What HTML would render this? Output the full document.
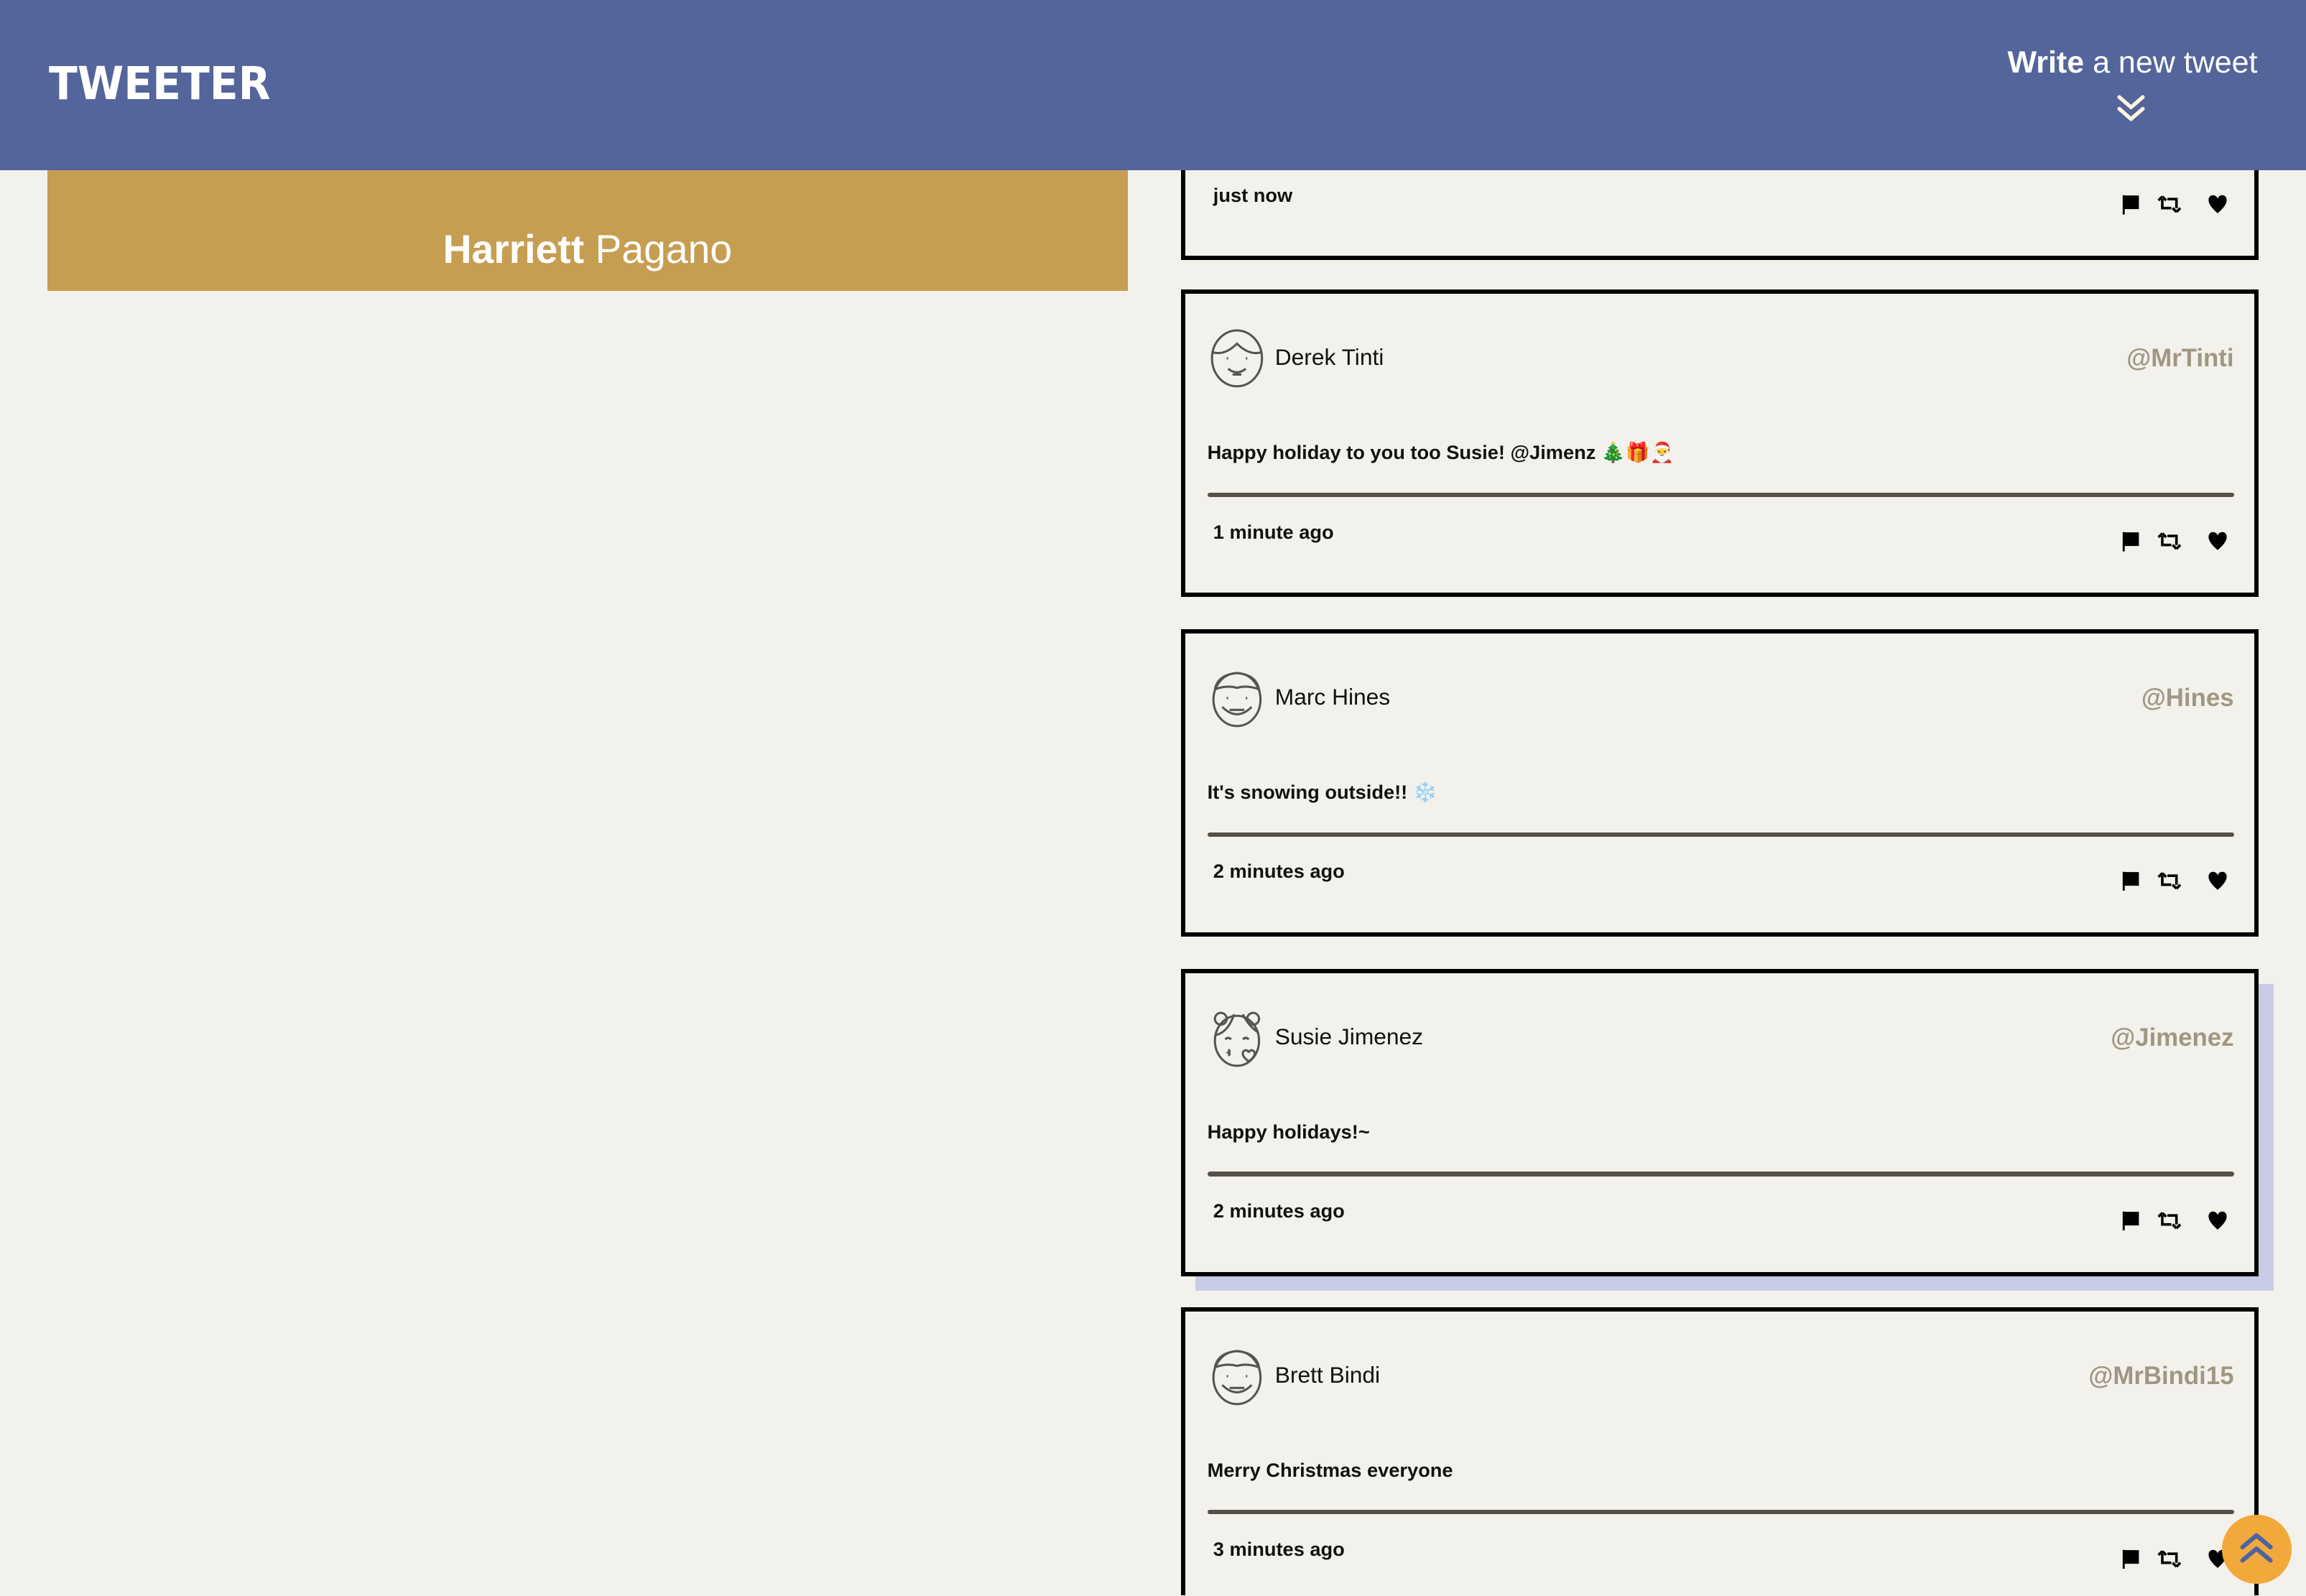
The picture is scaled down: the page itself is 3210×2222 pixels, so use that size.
<!DOCTYPE html>
<html><head><meta charset="utf-8"><style>
html,body{margin:0;padding:0;background:#f3f1ec;overflow:hidden}
#w{zoom:2.0472;width:1568px;height:1085px;position:relative;overflow:hidden;font-family:"Liberation Sans","Noto Sans CJK JP",sans-serif;background:#f3f1ec}
.hdr{position:absolute;left:0;top:0;width:1568px;height:116px;background:#53659a;z-index:5}
.logo{position:absolute;left:33px;top:40px;color:#fff;font:900 31px/34px "DejaVu Sans","Liberation Sans",sans-serif;transform:scaleX(0.92);transform-origin:left}
.wr{position:absolute;right:33px;top:31px;color:#fff;font-size:21px;font-weight:300}
.wr b{font-weight:700}
.chev{position:absolute;left:1439px;top:64px}
.gold{position:absolute;left:32px;top:100px;width:735px;height:98px;background:#c69e52}
.name{position:absolute;left:0;width:735px;top:54px;text-align:center;color:#fff;font-size:27px;font-weight:300}
.name b{font-weight:700}
.t{position:absolute;left:803px;width:727px;height:203px;border:3px solid #000;background:#f3f1ec}
.sh{position:absolute;left:813px;top:669px;width:733px;height:209px;background:#c8cce6}
.av{position:absolute;left:16px;top:24px}
.nm{position:absolute;left:61px;top:34px;font-size:15.5px;font-weight:300;color:#111}
.hd{position:absolute;right:14px;top:34px;font-size:17px;font-weight:700;color:#a09783}
.tx{position:absolute;left:15px;top:100px;font-size:13.3px;font-weight:700;color:#111}
.ln{position:absolute;left:15px;right:14px;top:135px;height:3px;background:#54514b;border-radius:2px}
.tm{position:absolute;left:19px;top:154px;font-size:13.3px;font-weight:700;color:#111}
.ic{position:absolute;right:14px;top:161px}
.up{position:absolute;left:1511px;top:1030px;width:47px;height:47px;border-radius:50%;background:#f2a93b;z-index:6}
</style></head><body><div id="w">
<div class="gold"><div class="name"><b>Harriett</b> Pagano</div></div>
<div class="hdr">
<div class="logo">TWEETER</div>
<div class="wr"><b>Write</b> a new tweet</div>
<svg class="chev" width="20" height="20" viewBox="0 0 20 20"><path d="M2 2l8 7 8-7M2 10l8 7 8-7" fill="none" stroke="#fdf5df" stroke-width="2.6" stroke-linecap="round" stroke-linejoin="round"/></svg>
</div>

<div class="sh"></div>

<div class="t" style="top:-32px"><div class="tm">just now</div>
<svg class="ic" width="80" height="14" viewBox="0 0 84 16"><path d="M2 1v15M3 2h10v9H3z" stroke="#000" stroke-width="1.6" fill="#000"/><path d="M32 4v7h7M32 2l-3 3M32 2l3 3M36 4h7v7M43 14l-3-3M43 14l3-3" stroke="#000" stroke-width="2" fill="none"/><path d="M68 5a3.5 3.5 0 0 1 7-1a3.5 3.5 0 0 1 7 1q0 4-7 10q-7-6-7-10z" fill="#000"/></svg></div>

<div class="t" style="top:197px">
<svg class="av" width="38" height="40" viewBox="0 0 38 40" fill="none" stroke="#555" stroke-width="1.5"><ellipse cx="19" cy="20" rx="17" ry="19"/><path d="M3 16q8 2 16-6q8 8 16 6"/><path d="M12 20h1M25 20h1M13 27q6 5 12 0M16 31h6"/></svg>
<div class="nm">Derek Tinti</div><div class="hd">@MrTinti</div>
<div class="tx">Happy holiday to you too Susie! @Jimenz 🎄🎁🎅</div>
<div class="ln"></div><div class="tm">1 minute ago</div>
<svg class="ic" width="80" height="14" viewBox="0 0 84 16"><path d="M2 1v15M3 2h10v9H3z" stroke="#000" stroke-width="1.6" fill="#000"/><path d="M32 4v7h7M32 2l-3 3M32 2l3 3M36 4h7v7M43 14l-3-3M43 14l3-3" stroke="#000" stroke-width="2" fill="none"/><path d="M68 5a3.5 3.5 0 0 1 7-1a3.5 3.5 0 0 1 7 1q0 4-7 10q-7-6-7-10z" fill="#000"/></svg></div>

<div class="t" style="top:428px">
<svg class="av" width="38" height="40" viewBox="0 0 38 40" fill="none" stroke="#555" stroke-width="1.5"><ellipse cx="19" cy="21" rx="16" ry="18"/><path d="M4 14q2-10 15-11q13 1 15 11q-8-3-15-1q-7-2-15 1"/><path d="M12 20h1M25 20h1M9 26q10 10 20 0M14 28h10"/></svg>
<div class="nm">Marc Hines</div><div class="hd">@Hines</div>
<div class="tx">It's snowing outside!! ❄️</div>
<div class="ln"></div><div class="tm">2 minutes ago</div>
<svg class="ic" width="80" height="14" viewBox="0 0 84 16"><path d="M2 1v15M3 2h10v9H3z" stroke="#000" stroke-width="1.6" fill="#000"/><path d="M32 4v7h7M32 2l-3 3M32 2l3 3M36 4h7v7M43 14l-3-3M43 14l3-3" stroke="#000" stroke-width="2" fill="none"/><path d="M68 5a3.5 3.5 0 0 1 7-1a3.5 3.5 0 0 1 7 1q0 4-7 10q-7-6-7-10z" fill="#000"/></svg></div>

<div class="t" style="top:659px">
<svg class="av" width="38" height="40" viewBox="0 0 38 40" fill="none" stroke="#555" stroke-width="1.5"><ellipse cx="19" cy="22" rx="15" ry="17"/><circle cx="8" cy="7" r="4"/><circle cx="30" cy="7" r="4"/><path d="M5 18q8-2 12-14M23 4q4 8 10 12"/><path d="M11 21q2-2 4 0M23 21q2-2 4 0M13 28q2 1 0 2q2 1 0 2"/><path d="M23 31a2 2 0 0 1 4-1a2 2 0 0 1 4 1q0 2-4 5q-4-3-4-5z"/></svg>
<div class="nm">Susie Jimenez</div><div class="hd">@Jimenez</div>
<div class="tx">Happy holidays!~</div>
<div class="ln"></div><div class="tm">2 minutes ago</div>
<svg class="ic" width="80" height="14" viewBox="0 0 84 16"><path d="M2 1v15M3 2h10v9H3z" stroke="#000" stroke-width="1.6" fill="#000"/><path d="M32 4v7h7M32 2l-3 3M32 2l3 3M36 4h7v7M43 14l-3-3M43 14l3-3" stroke="#000" stroke-width="2" fill="none"/><path d="M68 5a3.5 3.5 0 0 1 7-1a3.5 3.5 0 0 1 7 1q0 4-7 10q-7-6-7-10z" fill="#000"/></svg></div>

<div class="t" style="top:889px">
<svg class="av" width="38" height="40" viewBox="0 0 38 40" fill="none" stroke="#555" stroke-width="1.5"><ellipse cx="19" cy="21" rx="16" ry="18"/><path d="M4 14q2-10 15-11q13 1 15 11q-8-3-15-1q-7-2-15 1"/><path d="M12 20h1M25 20h1M9 26q10 10 20 0M14 28h10"/></svg>
<div class="nm">Brett Bindi</div><div class="hd">@MrBindi15</div>
<div class="tx">Merry Christmas everyone</div>
<div class="ln"></div><div class="tm">3 minutes ago</div>
<svg class="ic" width="80" height="14" viewBox="0 0 84 16"><path d="M2 1v15M3 2h10v9H3z" stroke="#000" stroke-width="1.6" fill="#000"/><path d="M32 4v7h7M32 2l-3 3M32 2l3 3M36 4h7v7M43 14l-3-3M43 14l3-3" stroke="#000" stroke-width="2" fill="none"/><path d="M68 5a3.5 3.5 0 0 1 7-1a3.5 3.5 0 0 1 7 1q0 4-7 10q-7-6-7-10z" fill="#000"/></svg></div>

<div class="up"><svg width="47" height="47" viewBox="0 0 47 47"><path d="M14 22l9.5-8 9.5 8M14 31l9.5-8 9.5 8" fill="none" stroke="#4e62a3" stroke-width="3" stroke-linecap="round" stroke-linejoin="round"/></svg></div>
</div></body></html>
